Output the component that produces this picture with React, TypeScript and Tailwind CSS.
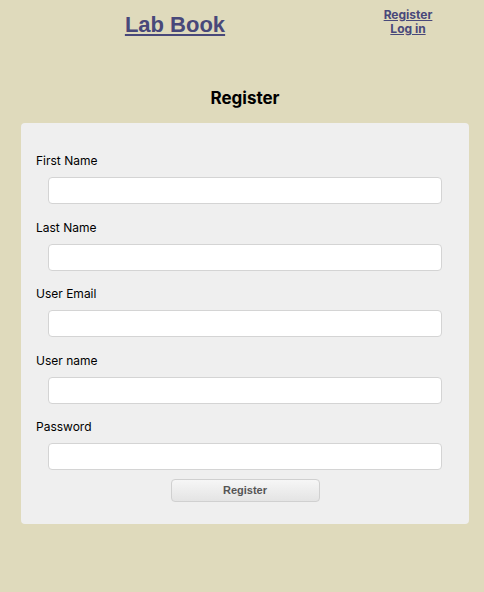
export default function App() {
  const fields = ['First Name', 'Last Name', 'User Email', 'User name', 'Password'];
  return (
    <div className="min-h-[592px] bg-[#dfdabc] font-['Inter','Roboto',sans-serif]">
      <header className="flex h-[56px]">
        <div className="flex w-[350px] justify-center pt-[11px]">
          <a href="#" className="font-['Liberation_Sans',Arial,sans-serif] text-[22px] font-bold leading-[28px] text-[#48487a] underline">
            Lab Book
          </a>
        </div>
        <div className="flex w-[116px] flex-col items-center pt-[8px] text-[12px] font-bold leading-[14px] text-[#48487a]">
          <a href="#" className="underline">Register</a>
          <a href="#" className="underline">Log in</a>
        </div>
      </header>
      <h1 className="mt-[30px] pl-[6px] text-center text-[17px] font-bold leading-[24px] text-black">Register</h1>
      <form className="ml-[21px] mr-[15px] mt-[13px] h-[401px] rounded-[4px] bg-[#efefef] pl-[15px] pt-[30px]">
        {fields.map((f) => (
          <div key={f} className="mb-[15.5px]">
            <label className="block text-[12px] leading-[16px] text-black">{f}</label>
            <input
              type={f === 'Password' ? 'password' : 'text'}
              className="mt-[8px] ml-[12px] block h-[27px] w-[394px] rounded-[4px] border border-[#d4d4d4] bg-white"
            />
          </div>
        ))}
        <div className="-mt-[6.5px] flex justify-center pr-[15px]">
          <button
            type="button"
            className="h-[23px] w-[149px] rounded-[4px] border border-[#d0d0d0] bg-gradient-to-b from-[#f6f6f6] to-[#e4e4e4] font-['Liberation_Sans',Arial,sans-serif] text-[11px] font-bold text-[#555]"
          >
            Register
          </button>
        </div>
      </form>
    </div>
  );
}
